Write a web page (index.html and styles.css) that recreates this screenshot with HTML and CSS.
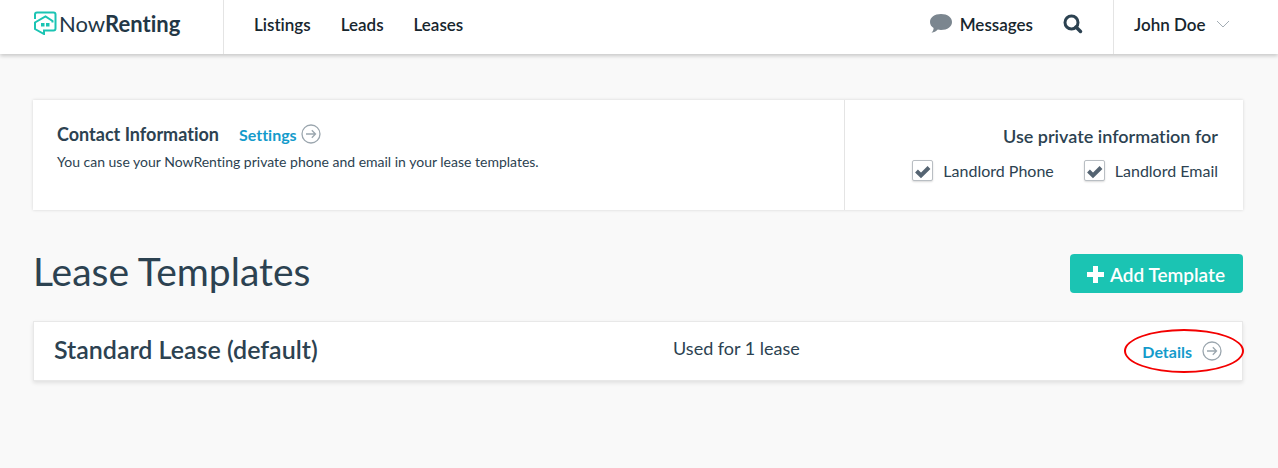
FILE: index.html
```
<!DOCTYPE html>
<html lang="en">
<head>
<meta charset="UTF-8">
<meta name="viewport" content="width=device-width, initial-scale=1.0">
<title>Lease Templates</title>
<link rel="stylesheet" href="styles.css">
</head>
<body>
  <header class="topbar">
    <a href="#" class="logo">
      <svg width="24" height="24" viewBox="0 0 24 24" fill="none" stroke="#1bc4b3" stroke-width="2">
        <path d="M2 8V3.500Q2 1.500 4 1.500H20.500Q22.500 1.500 22.500 3.500V17.500Q22.500 19.500 20.500 19.500H11V23L2 18V11.500L12.500 5.500L19.500 10V11.500"/>
        <path d="M8 12h3.500v3.500H8zM13 12h3.500v3.500H13z" fill="#1bc4b3" stroke="none"/>
      </svg>
      <span>Now<b>Renting</b></span>
    </a>
    <nav class="nav">
      <a href="#">Listings</a>
      <a href="#">Leads</a>
      <a href="#">Leases</a>
    </nav>
    <div class="tools">
      <a href="#" class="messages">
        <svg width="22" height="20" viewBox="0 0 22 20" fill="#7b868f">
          <path d="M11 0C17.500 0 22 3.500 22 8S17.500 16 11 16C9.800 16 8.800 15.900 7.800 15.600C6 17.300 4 18.500 1.500 18.800C2.800 17.500 3.500 16 3.600 14C1.300 12.600 0 10.500 0 8C0 3.500 4.500 0 11 0Z"/>
        </svg>
        Messages
      </a>
      <button type="button" class="search" aria-label="Search">
        <svg width="20" height="20" viewBox="0 0 20 20" fill="none" stroke="#2c4251" stroke-width="3">
          <circle cx="8.500" cy="8.500" r="6.500"/>
          <path d="M13 13l4.500 4.500" stroke-width="3.500" stroke-linecap="round"/>
        </svg>
      </button>
    </div>
    <button type="button" class="user">
      John Doe
      <svg width="14" height="8" viewBox="0 0 14 8" fill="none" stroke="#a3adb4">
        <path d="M1 1l6 6 6-6"/>
      </svg>
    </button>
  </header>

  <main class="page">
    <section class="contact">
      <div class="contact-info">
        <div class="contact-title">
          <h2>Contact Information</h2>
          <a href="#" class="arrow-link">Settings
            <svg class="arrow" viewBox="0 0 20 20" fill="none" stroke="#9ba6ae">
              <circle cx="10" cy="10" r="9" stroke-width="1.300"/>
              <path d="M5 10h9.500M10.800 6.300l3.700 3.700-3.700 3.700" stroke-width="1.300"/>
            </svg>
          </a>
        </div>
        <p>You can use your NowRenting private phone and email in your lease templates.</p>
      </div>
      <div class="private">
        <h3>Use private information for</h3>
        <div class="checks">
          <input type="checkbox" id="phone" checked>
          <label for="phone">Landlord Phone</label>
          <input type="checkbox" id="email" checked>
          <label for="email">Landlord Email</label>
        </div>
      </div>
    </section>

    <div class="heading">
      <h1>Lease Templates</h1>
      <button type="button" class="add">
        <svg width="17" height="17" viewBox="0 0 17 17" fill="#fff">
          <path d="M6 0h5v6h6v5h-6v6H6v-6H0V6h6z"/>
        </svg>
        Add Template
      </button>
    </div>

    <section class="template">
      <h2>Standard Lease (default)</h2>
      <span class="usage">Used for 1 lease</span>
      <a href="#" class="arrow-link details">Details
        <svg class="arrow" viewBox="0 0 20 20" fill="none" stroke="#9ba6ae">
          <circle cx="10" cy="10" r="9" stroke-width="1.300"/>
          <path d="M5 10h9.500M10.800 6.300l3.700 3.700-3.700 3.700" stroke-width="1.300"/>
        </svg>
      </a>
    </section>
  </main>
</body>
</html>
```
FILE: styles.css
```
* {
  box-sizing: border-box;
}
body {
  margin: 0;
  background-color: #f9f9f9;
  color: #2c4251;
  font-family: Lato, "Open Sans", sans-serif;
  font-variant-ligatures: none;
}
h1, h2, h3, p {
  margin: 0;
}
a {
  color: inherit;
  text-decoration: none;
}
button {
  border: none;
  background: none;
  padding: 0;
  font-family: inherit;
  font-variant-ligatures: none;
  cursor: pointer;
}
svg {
  flex: none;
}
.topbar {
  display: flex;
  height: 54px;
  background-color: #fff;
  color: #17262e;
  box-shadow: 0 2px 4px rgba(0, 0, 0, 0.2);
  font-size: 17px;
  font-weight: 600;
}
.topbar > * {
  padding-bottom: 6px;
}
.logo {
  display: flex;
  align-items: center;
  width: 224px;
  padding-left: 33px;
  gap: 2px;
  border-right: 1px solid #e4e4e4;
  color: #233746;
  font-size: 22px;
  font-weight: 400;
}
.topbar .logo {
  padding-bottom: 8px;
}
.logo b {
  font-weight: 700;
}
.nav {
  display: flex;
  align-items: center;
  gap: 30px;
  padding-left: 30px;
}
.tools {
  display: flex;
  align-items: center;
  gap: 30px;
  margin-left: auto;
  padding-right: 30px;
}
.messages {
  display: flex;
  align-items: center;
  gap: 8px;
}
.search {
  display: flex;
}
.user {
  display: flex;
  align-items: center;
  width: 165px;
  padding-left: 20px;
  gap: 10px;
  border-left: 1px solid #e4e4e4;
  color: #17262e;
  font-size: 17px;
  font-weight: 600;
}
.page {
  padding: 46px 35px 40px 33px;
}
.contact {
  display: flex;
  background-color: #fff;
  box-shadow: 0 0 3px rgba(0, 0, 0, 0.15);
}
.contact-info {
  flex: 1;
  padding: 21px 24px 38px;
}
.contact-title {
  display: flex;
  align-items: center;
  gap: 20px;
}
.contact h2 {
  font-size: 18px;
  line-height: 26px;
}
.contact p {
  margin-top: 5px;
  font-size: 14px;
  line-height: 20px;
}
.arrow-link {
  display: flex;
  align-items: center;
  gap: 4px;
  color: #149bcb;
  font-size: 16px;
  font-weight: 700;
}
.arrow {
  width: 20px;
  height: 20px;
}
.private {
  width: 33%;
  padding: 24px 25px;
  border-left: 1px solid #e4e4e4;
  text-align: right;
}
.private h3 {
  font-size: 18px;
  font-weight: 600;
  line-height: 24px;
}
.checks {
  display: flex;
  align-items: center;
  justify-content: flex-end;
  margin-top: 12px;
  font-size: 16px;
}
.checks input {
  appearance: none;
  width: 21px;
  height: 21px;
  margin: 0 10px 0 30px;
  border: 1px solid #b9bec3;
  border-radius: 2px;
  background: #fff;
  box-shadow: 0 1px 2px rgba(0, 0, 0, 0.15);
}
.checks input:checked {
  background: #fff url("data:image/svg+xml,%3Csvg xmlns='http://www.w3.org/2000/svg' viewBox='0 0 19 19'%3E%3Cpath d='M3.500 10l4.500 4.500 8-8' fill='none' stroke='%23556472' stroke-width='4'/%3E%3C/svg%3E") center no-repeat;
}
.heading {
  display: flex;
  align-items: center;
  justify-content: space-between;
  margin: 38px 0 23px;
}
.heading h1 {
  padding-bottom: 4px;
  font-size: 39px;
  font-weight: 400;
  line-height: 46px;
}
.add {
  display: flex;
  align-items: center;
  height: 39px;
  padding: 2px 18px 0 17px;
  gap: 6px;
  border-radius: 4px;
  background-color: #1bc4b3;
  color: #fff;
  font-size: 19px;
  font-weight: 600;
}
.template {
  display: grid;
  grid-template-columns: 53% 1fr auto;
  align-items: center;
  height: 60px;
  padding: 0 20px;
  border: 1px solid #e8e8e8;
  background-color: #fff;
  box-shadow: 0 2px 4px rgba(0, 0, 0, 0.1);
}
.template h2 {
  padding-bottom: 4px;
  font-size: 25px;
  font-weight: 600;
}
.usage {
  padding-bottom: 6px;
  font-size: 18px;
}
.details {
  position: relative;
  gap: 10px;
}
/* red ring around the link */
.details::after {
  content: "";
  position: absolute;
  inset: -12px -22px -12px -18px;
  border: 2px solid #f30000;
  border-radius: 50%;
}
```
